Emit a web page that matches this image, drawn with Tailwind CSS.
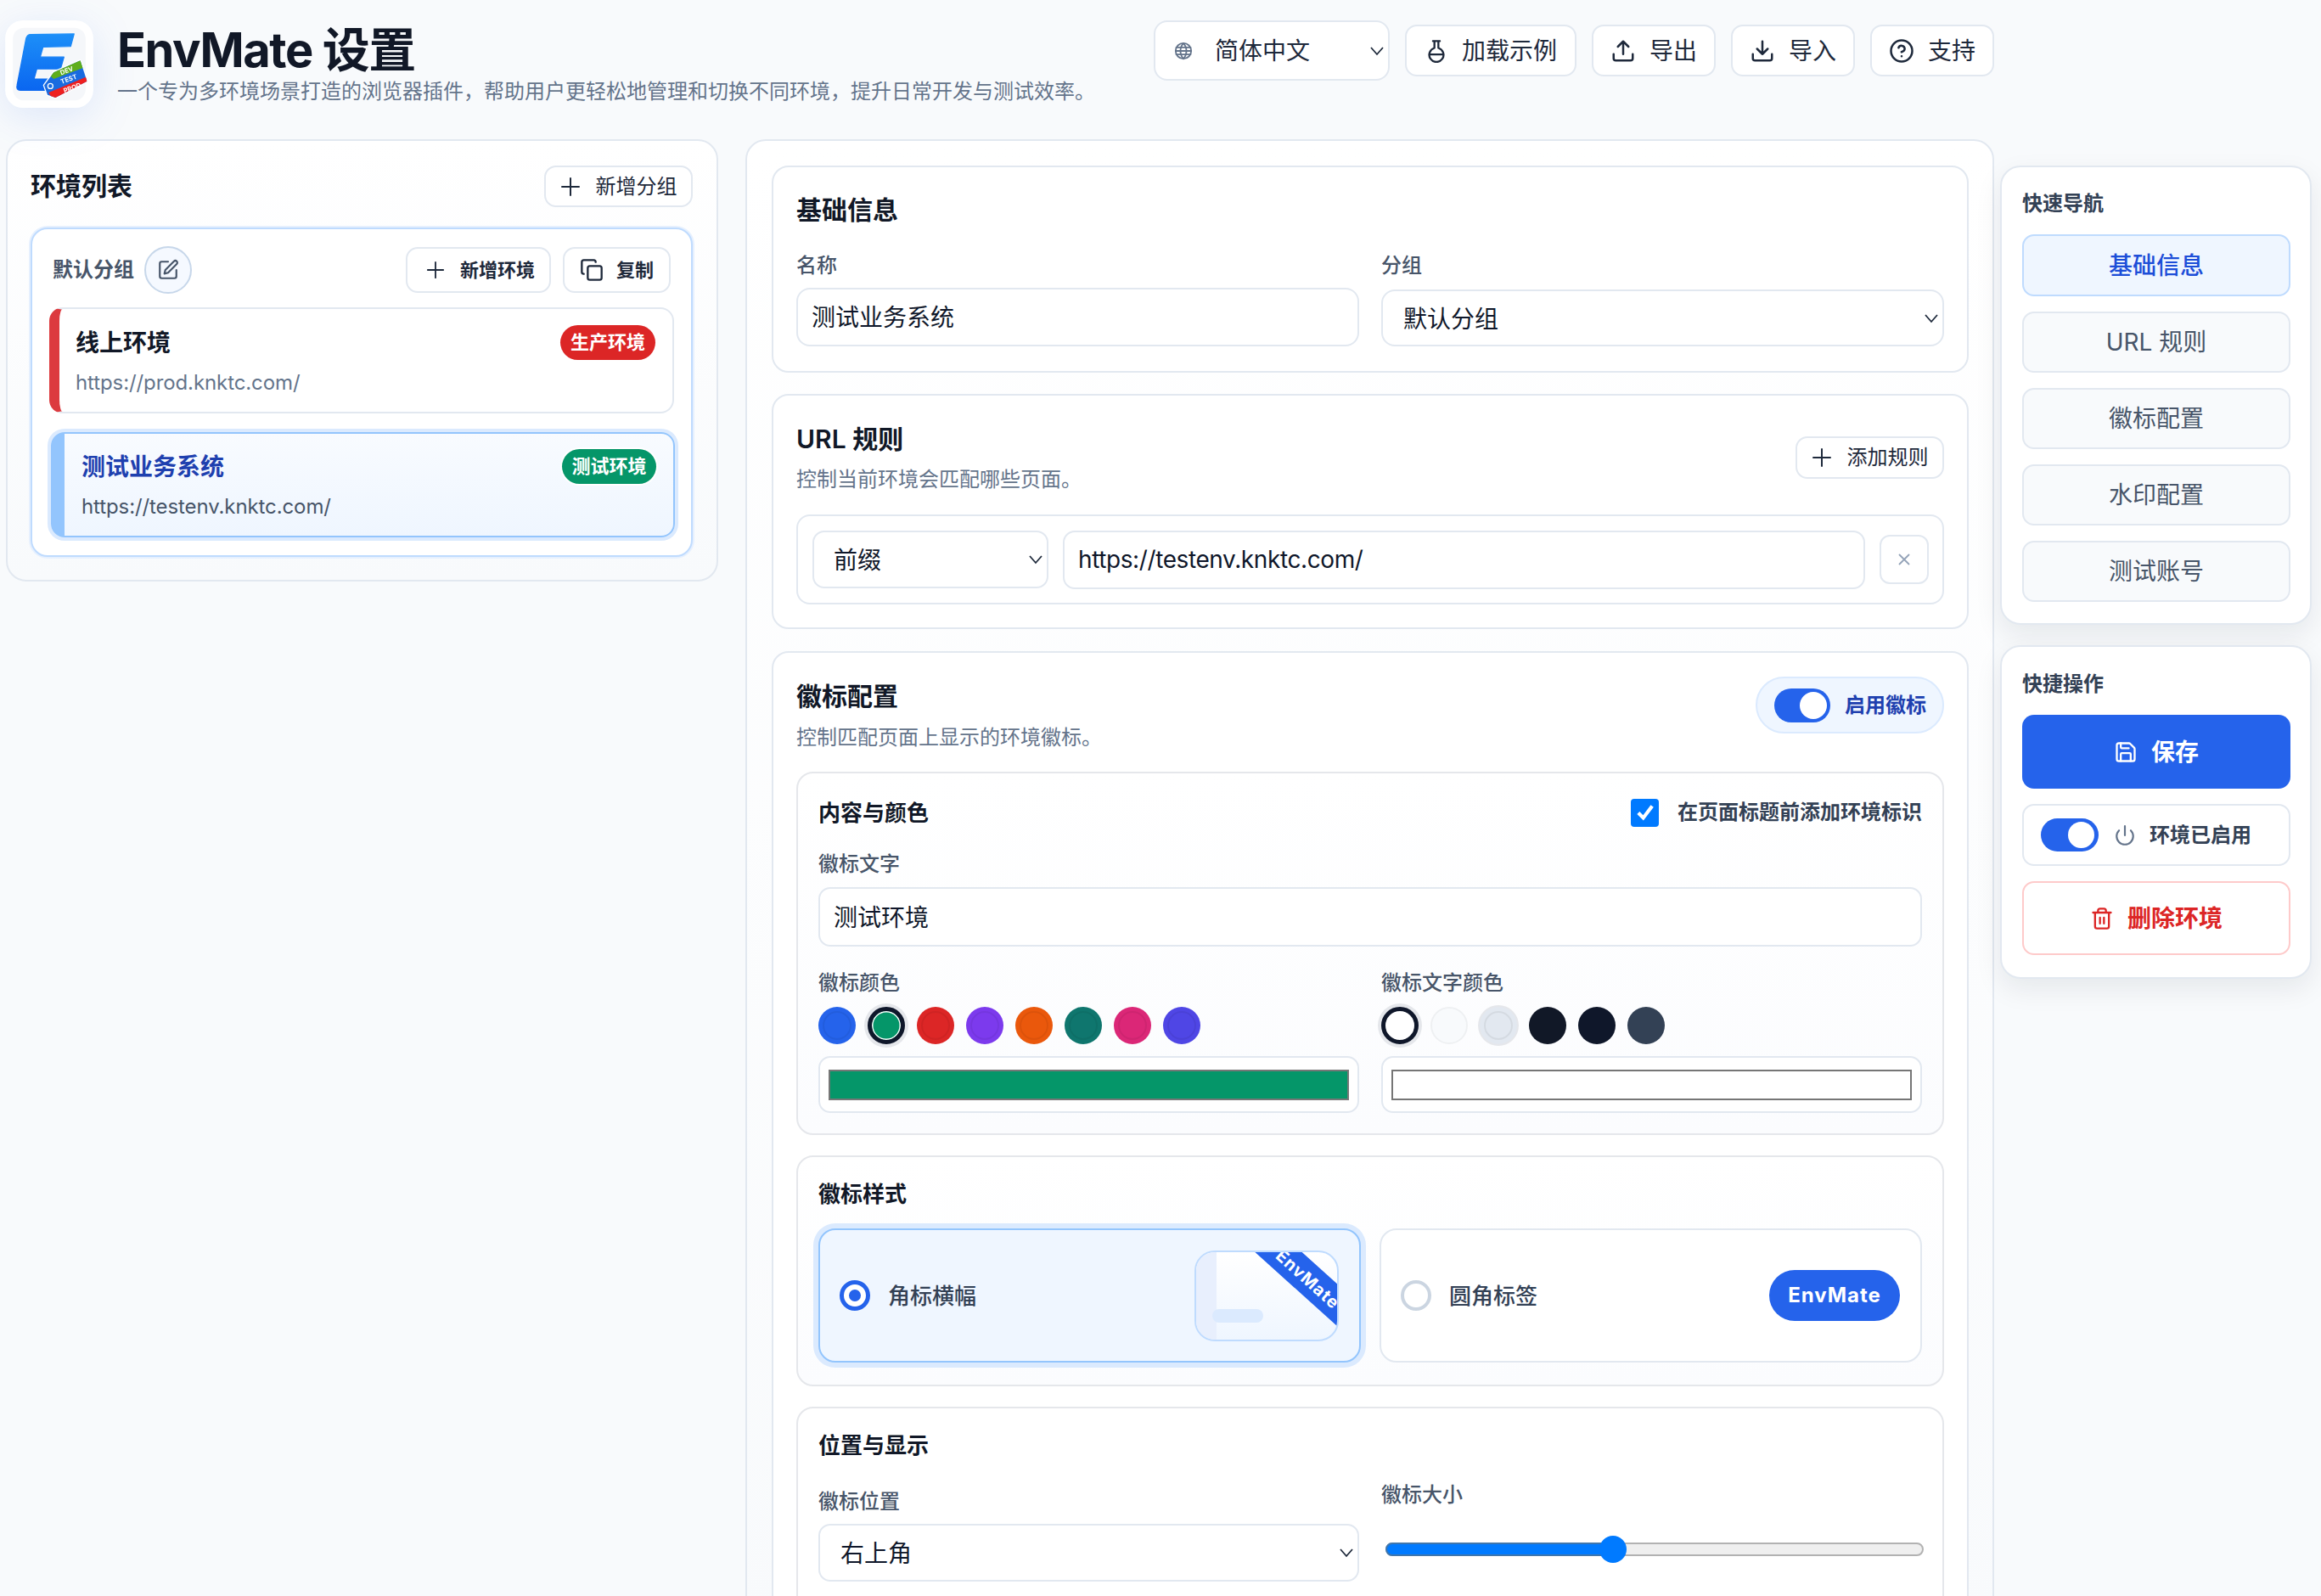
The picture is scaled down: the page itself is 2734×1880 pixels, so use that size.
<!DOCTYPE html>
<html lang="zh-CN">

<head>
    <meta charset="UTF-8">
    <title>EnvMate 设置</title>
    <script src="https://cdn.jsdelivr.net/npm/@tailwindcss/browser@4"></script>
</head>

<body class="h-[1880px] overflow-hidden bg-[#f8fafc] text-[#0f172a] [font-family:Inter,'Noto_Sans_CJK_SC',sans-serif]">

    <!-- header -->
    <header class="flex h-[164px] pl-[6px] pr-[385px] pt-[24px]">
        <svg class="w-[104px] h-[103px] shrink-0 drop-shadow-[0_10px_24px_rgba(37,99,235,0.13)]" viewBox="18 42 312 310">
            <defs>
                <linearGradient id="eblue" x1="0" y1="0" x2="0" y2="1">
                    <stop offset="0" stop-color="#1d8ff8" />
                    <stop offset="1" stop-color="#0a66f0" />
                </linearGradient>
                <clipPath id="tagclip">
                    <path d="M156 272 L190 226 L284 184 L308 258 L196 316 L168 306 Z" />
                </clipPath>
            </defs>
            <rect x="18" y="42" width="312" height="310" rx="62" fill="#fff" />
            <rect x="45" y="68" width="258" height="258" rx="40" fill="#f5f7fa" />
            <path d="M108 92 L262 90 L250 134 L152 136 L142 172 L226 172 L214 214 L130 214 L120 250 L190 250 L178 290 L72 290 Q56 290 60 272 L92 106 Q96 92 108 92 Z" fill="url(#eblue)" stroke="url(#eblue)" stroke-width="4" stroke-linejoin="round" />
            <path d="M156 272 L190 226 L284 184 L308 258 L196 316 L168 306 Z" fill="#fff" stroke="#fff" stroke-width="8" stroke-linejoin="round" />
            <g clip-path="url(#tagclip)">
                <rect x="140" y="170" width="190" height="160" fill="#1a6be0" />
                <path d="M170 232 L300 170 L300 208 L190 250 Z" fill="#5fae1a" />
                <path d="M172 298 L320 236 L320 300 L190 330 Z" fill="#ee2020" />
            </g>
            <circle cx="178" cy="275" r="9" fill="#1a6be0" stroke="#fff" stroke-width="4" />
            <g fill="#fff" font-family="Inter, sans-serif" font-weight="700" font-size="23">
                <text x="216" y="236" transform="rotate(-20 216 236)">DEV</text>
                <text x="218" y="268" transform="rotate(-20 218 268)">TEST</text>
                <text x="228" y="300" transform="rotate(-20 228 300)">PROD</text>
            </g>
        </svg>
        <div class="ml-[28px] flex flex-col pt-[2px]">
            <h1 class="text-[56px] leading-[66px] font-bold tracking-tight text-[#111827]">EnvMate 设置</h1>
            <p class="text-[24px] leading-[32px] text-[#64748b]">一个专为多环境场景打造的浏览器插件，帮助用户更轻松地管理和切换不同环境，提升日常开发与测试效率。</p>
        </div>
        <div class="ml-auto flex h-[71px] items-center gap-[18px] text-[28px] text-[#1e293b]">
            <div class="relative h-[71px] w-[278px]">
                <svg class="absolute left-[24px] top-[25px] w-[22px] h-[22px] text-[#64748b]" viewBox="0 0 24 24" fill="none" stroke="currentColor" stroke-width="2">
                    <circle cx="12" cy="12" r="10" />
                    <path d="M2 12h20M2 7.5h20M2 16.5h20M12 2a15 15 0 0 1 0 20a15 15 0 0 1 0-20" />
                </svg>
                <select class="h-full w-full appearance-none rounded-[16px] border-2 border-[#e2e8f0] bg-white pl-[70px] text-[28px]">
                    <option>简体中文</option>
                </select>
                <svg class="absolute right-[6px] top-[28px] w-[18px] h-[16px]" viewBox="0 0 18 16" fill="none" stroke="#1e293b" stroke-width="1.8"><path d="M2 4l7 8 7-8" /></svg>
            </div>
            <button class="flex h-[61px] w-[202px] items-center justify-center gap-[16px] rounded-[14px] border-2 border-[#e2e8f0] bg-white">
                <svg class="w-[28px] h-[28px]" viewBox="0 0 24 24" fill="none" stroke="currentColor" stroke-width="2" stroke-linecap="round" stroke-linejoin="round"><path d="M8.5 2h7M10 2v7a7.2 7.2 0 1 0 4 0V2M5 15.5h14" /></svg>
                加载示例
            </button>
            <button class="flex h-[61px] w-[146px] items-center justify-center gap-[16px] rounded-[14px] border-2 border-[#e2e8f0] bg-white">
                <svg class="w-[30px] h-[30px]" viewBox="0 0 24 24" fill="none" stroke="currentColor" stroke-width="2" stroke-linecap="round" stroke-linejoin="round"><path d="M21 15v4a2 2 0 0 1-2 2H5a2 2 0 0 1-2-2v-4M17 8l-5-5-5 5M12 3v12" /></svg>
                导出
            </button>
            <button class="flex h-[61px] w-[146px] items-center justify-center gap-[16px] rounded-[14px] border-2 border-[#e2e8f0] bg-white">
                <svg class="w-[30px] h-[30px]" viewBox="0 0 24 24" fill="none" stroke="currentColor" stroke-width="2" stroke-linecap="round" stroke-linejoin="round"><path d="M21 15v4a2 2 0 0 1-2 2H5a2 2 0 0 1-2-2v-4M7 10l5 5 5-5M12 15V3" /></svg>
                导入
            </button>
            <button class="flex h-[61px] w-[146px] items-center justify-center gap-[16px] rounded-[14px] border-2 border-[#e2e8f0] bg-white">
                <svg class="w-[30px] h-[30px]" viewBox="0 0 24 24" fill="none" stroke="currentColor" stroke-width="2" stroke-linecap="round" stroke-linejoin="round"><circle cx="12" cy="12" r="10" /><path d="M9.1 9a3 3 0 0 1 5.8 1c0 2-3 3-3 3M12 17h.01" /></svg>
                支持
            </button>
        </div>
    </header>

    <div class="flex items-start pl-[7px]">

        <!-- env list -->
        <aside class="w-[839px] rounded-[24px] border-2 border-[#e2e8f0] bg-gradient-to-b from-white to-[#f8fafc] pl-[27px] pr-[28px] pb-[27px] pt-[29px]">
            <div class="flex h-[49px] items-center justify-between">
                <h2 class="text-[30px] font-semibold text-[#111827]">环境列表</h2>
                <button class="flex h-[49px] w-[175px] items-center justify-center gap-[18px] rounded-[14px] border-2 border-[#e2e8f0] bg-white text-[24px] text-[#1e293b]">
                    <svg class="w-[24px] h-[24px]" viewBox="0 0 24 24" fill="none" stroke="currentColor" stroke-width="2" stroke-linecap="round"><path d="M12 2v20M2 12h20" /></svg>
                    新增分组
                </button>
            </div>
            <div class="mt-[24px] rounded-[20px] border-2 border-[#bfdbfe] bg-white px-[20px] pb-[21px] pt-[20px] shadow-[0_0_0_2px_#e6f0fe]">
                <div class="flex h-[56px] items-center">
                    <span class="ml-[4px] text-[24px] font-semibold text-[#475569]">默认分组</span>
                    <button class="ml-[12px] flex h-[56px] w-[56px] items-center justify-center rounded-full border-2 border-[#c7d7ea] bg-[#f5f9ff] text-[#475569]">
                        <svg class="w-[26px] h-[26px]" viewBox="0 0 24 24" fill="none" stroke="currentColor" stroke-width="2" stroke-linecap="round" stroke-linejoin="round"><path d="M12 3H5a2 2 0 0 0-2 2v14a2 2 0 0 0 2 2h14a2 2 0 0 0 2-2v-7" /><path d="M18.4 2.6a2.1 2.1 0 1 1 3 3L12 15l-4 1 1-4Z" /></svg>
                    </button>
                    <button class="ml-auto flex h-[54px] w-[171px] items-center gap-[18px] rounded-[14px] border-2 border-[#e2e8f0] bg-white pl-[22px] text-[22px] font-semibold text-[#1e293b]">
                        <svg class="w-[22px] h-[22px]" viewBox="0 0 24 24" fill="none" stroke="currentColor" stroke-width="2" stroke-linecap="round"><path d="M12 2v20M2 12h20" /></svg>
                        新增环境
                    </button>
                    <button class="ml-[14px] mr-[4px] flex h-[54px] w-[127px] items-center justify-center gap-[15px] rounded-[14px] border-2 border-[#e2e8f0] bg-white text-[22px] font-semibold text-[#1e293b]">
                        <svg class="w-[28px] h-[28px]" viewBox="0 0 24 24" fill="none" stroke="currentColor" stroke-width="2" stroke-linecap="round" stroke-linejoin="round"><rect x="8" y="8" width="14" height="14" rx="2" /><path d="M4 16a2 2 0 0 1-2-2V4a2 2 0 0 1 2-2h10a2 2 0 0 1 2 2" /></svg>
                        复制
                    </button>
                </div>
                <div class="mt-[16px] h-[125px] rounded-[16px] border-2 border-l-[12px] border-[#e2e8f0] border-l-[#dc3a3f] bg-white pl-[19px] pr-[20px] pt-[19px]">
                    <div class="flex h-[41px] items-center justify-between">
                        <span class="text-[28px] font-semibold text-[#111827]">线上环境</span>
                        <span class="flex h-[41px] w-[112px] items-center justify-center rounded-full bg-[#dc2626] text-[22px] font-bold text-white">生产环境</span>
                    </div>
                    <p class="mt-[9px] text-[24px] leading-[36px] tracking-[-0.1px] text-[#64748b]">https://prod.knktc.com/</p>
                </div>
                <div class="ml-[2px] mr-[-1px] mt-[22px] h-[124px] rounded-[16px] border-2 border-l-[16px] border-[#93c5fd] bg-gradient-to-b from-[#f8fbff] to-[#eff6ff] pl-[20px] pr-[20px] pt-[18px] shadow-[0_0_0_4px_#dbeafe]">
                    <div class="flex h-[41px] items-center justify-between">
                        <span class="text-[28px] font-bold text-[#1e40af]">测试业务系统</span>
                        <span class="flex h-[41px] w-[111px] items-center justify-center rounded-full bg-[#059669] text-[22px] font-bold text-white shadow-[0_0_0_2px_#fff]">测试环境</span>
                    </div>
                    <p class="mt-[9px] text-[24px] leading-[36px] tracking-[-0.1px] text-[#475569]">https://testenv.knktc.com/</p>
                </div>
            </div>
        </aside>

        <!-- main form -->
        <main class="ml-[32px] w-[1471px] shrink-0 rounded-[24px] border-2 border-[#e2e8f0] bg-gradient-to-b from-white to-[#f8fafc] pl-[29px] pr-[28px] pt-[29px]">

            <section class="h-[244px] rounded-[20px] border-2 border-[#e2e8f0] bg-white px-[27px] pt-[30px]">
                <h3 class="text-[30px] font-semibold leading-[40px] text-[#111827]">基础信息</h3>
                <div class="mt-[30px] grid grid-cols-2 gap-x-[26px]">
                    <div>
                        <label class="block text-[24px] font-medium leading-[32px] text-[#475569]">名称</label>
                        <input class="mt-[10px] h-[69px] w-full rounded-[16px] border-2 border-[#e2e8f0] bg-white px-[16px] pb-[3px] text-[28px]" value="测试业务系统">
                    </div>
                    <div>
                        <label class="block text-[24px] font-medium leading-[32px] text-[#475569]">分组</label>
                        <div class="relative mt-[12px] h-[67px]">
                            <select class="h-full w-full appearance-none rounded-[16px] border-2 border-[#e2e8f0] bg-white pl-[24px] pt-[2px] text-[28px]">
                                <option>默认分组</option>
                            </select>
                            <svg class="absolute right-[6px] top-[26px] w-[18px] h-[16px]" viewBox="0 0 18 16" fill="none" stroke="#1e293b" stroke-width="1.8"><path d="M2 4l7 8 7-8" /></svg>
                        </div>
                    </div>
                </div>
            </section>

            <section class="mt-[25px] h-[277px] rounded-[20px] border-2 border-[#e2e8f0] bg-white px-[27px] pt-[31px]">
                <div class="flex items-center justify-between">
                    <div>
                        <h3 class="text-[30px] font-semibold leading-[40px] text-[#111827]">URL 规则</h3>
                        <p class="mt-[12px] text-[24px] leading-[32px] text-[#64748b]">控制当前环境会匹配哪些页面。</p>
                    </div>
                    <button class="flex h-[50px] w-[175px] items-center justify-center gap-[18px] rounded-[14px] border-2 border-[#e2e8f0] bg-white text-[24px] text-[#1e293b]">
                        <svg class="w-[24px] h-[24px]" viewBox="0 0 24 24" fill="none" stroke="currentColor" stroke-width="2" stroke-linecap="round"><path d="M12 2v20M2 12h20" /></svg>
                        添加规则
                    </button>
                </div>
                <div class="mt-[25px] flex h-[106px] items-center gap-[17px] rounded-[16px] border-2 border-[#e2e8f0] bg-white pl-[17px] pr-[16px]">
                    <div class="relative h-[68px] w-[278px] shrink-0">
                        <select class="h-full w-full appearance-none rounded-[14px] border-2 border-[#e2e8f0] bg-white pl-[23px] pt-[2px] text-[28px]">
                            <option>前缀</option>
                        </select>
                        <svg class="absolute right-[6px] top-[26px] w-[18px] h-[16px]" viewBox="0 0 18 16" fill="none" stroke="#1e293b" stroke-width="1.8"><path d="M2 4l7 8 7-8" /></svg>
                    </div>
                    <input class="h-[69px] flex-1 rounded-[14px] border-2 border-[#e2e8f0] bg-white px-[16px] text-[28px] tracking-[-0.4px]" value="https://testenv.knktc.com/">
                    <button class="flex h-[58px] w-[58px] shrink-0 items-center justify-center rounded-[12px] border-2 border-[#e2e8f0] bg-white text-[#94a3b8]">
                        <svg class="w-[22px] h-[22px]" viewBox="0 0 24 24" fill="none" stroke="currentColor" stroke-width="2" stroke-linecap="round"><path d="M6 6l12 12M18 6L6 18" /></svg>
                    </button>
                </div>
            </section>

            <section class="mt-[26px] rounded-[20px] border-2 border-[#e2e8f0] bg-white px-[27px] pt-[31px]">
                <div class="flex items-start justify-between">
                    <div>
                        <h3 class="text-[30px] font-semibold leading-[40px] text-[#111827]">徽标配置</h3>
                        <p class="mt-[13px] text-[24px] leading-[32px] text-[#64748b]">控制匹配页面上显示的环境徽标。</p>
                    </div>
                    <div class="-mt-[3px] flex h-[67px] w-[222px] items-center rounded-full border-2 border-[#dbeafe] bg-[#eff6ff] pl-[20px]">
                        <span class="relative block h-[40px] w-[66px] rounded-full bg-[#2563eb]">
                            <span class="absolute right-[4px] top-[4px] h-[32px] w-[32px] rounded-full bg-white"></span>
                        </span>
                        <span class="ml-[17px] text-[24px] font-semibold text-[#1e40af]">启用徽标</span>
                    </div>
                </div>

                <!-- content and colours -->
                <div class="mt-[24px] rounded-[20px] border-2 border-[#e5e7eb] bg-gradient-to-b from-white to-[#fbfcfe] pl-[24px] pr-[24px] pt-[28px] pb-[24px] h-[428px]">
                    <div class="flex h-[36px] items-center justify-between">
                        <h4 class="text-[26px] font-semibold text-[#111827]">内容与颜色</h4>
                        <label class="flex items-center gap-[22px] text-[24px] font-semibold text-[#334155]">
                            <span class="flex h-[33px] w-[33px] items-center justify-center rounded-[4px] bg-[#007aff]">
                                <svg class="w-[28px] h-[28px]" viewBox="0 0 24 24" fill="none" stroke="#fff" stroke-width="3.6"><path d="M5 12.5l5 5L19 5.5" /></svg>
                            </span>
                            在页面标题前添加环境标识
                        </label>
                    </div>
                    <label class="mt-[27px] block text-[24px] font-medium leading-[32px] text-[#475569]">徽标文字</label>
                    <input class="mt-[11px] h-[70px] w-full rounded-[14px] border-2 border-[#e2e8f0] bg-white px-[16px] pb-[3px] text-[28px]" value="测试环境">
                    <div class="mt-[27px] grid grid-cols-2 gap-x-[26px]">
                        <div>
                            <label class="block text-[24px] font-medium leading-[32px] text-[#475569]">徽标颜色</label>
                            <div class="mt-[12px] flex h-[44px] gap-[14px]">
                                <span class="h-[44px] w-[44px] rounded-full bg-[#2563eb] [outline:2px_solid_rgba(0,0,0,0.06)] [outline-offset:-7px]"></span>
                                <span class="h-[44px] w-[44px] rounded-full border-[5px] border-[#0f172a] bg-[#059669] shadow-[inset_0_0_0_1.5px_#fff,0_0_0_4px_#e5e7eb]"></span>
                                <span class="h-[44px] w-[44px] rounded-full bg-[#dc2626] [outline:2px_solid_rgba(0,0,0,0.06)] [outline-offset:-7px]"></span>
                                <span class="h-[44px] w-[44px] rounded-full bg-[#7c3aed] [outline:2px_solid_rgba(0,0,0,0.06)] [outline-offset:-7px]"></span>
                                <span class="h-[44px] w-[44px] rounded-full bg-[#ea580c] [outline:2px_solid_rgba(0,0,0,0.06)] [outline-offset:-7px]"></span>
                                <span class="h-[44px] w-[44px] rounded-full bg-[#0f766e] [outline:2px_solid_rgba(0,0,0,0.06)] [outline-offset:-7px]"></span>
                                <span class="h-[44px] w-[44px] rounded-full bg-[#db2777] [outline:2px_solid_rgba(0,0,0,0.06)] [outline-offset:-7px]"></span>
                                <span class="h-[44px] w-[44px] rounded-full bg-[#4f46e5] [outline:2px_solid_rgba(0,0,0,0.06)] [outline-offset:-7px]"></span>
                            </div>
                            <div class="mt-[14px] flex h-[67px] items-center rounded-[14px] border-2 border-[#e2e8f0] bg-white px-[10px]">
                                <span class="block h-[36px] w-full border-2 border-[#767676] bg-[#059669]"></span>
                            </div>
                        </div>
                        <div>
                            <label class="block text-[24px] font-medium leading-[32px] text-[#475569]">徽标文字颜色</label>
                            <div class="mt-[12px] flex h-[44px] gap-[14px]">
                                <span class="h-[44px] w-[44px] rounded-full border-[5px] border-[#0f172a] bg-white shadow-[0_0_0_4px_#e5e7eb]"></span>
                                <span class="h-[44px] w-[44px] rounded-full bg-[#f8fafc] [outline:2px_solid_rgba(0,0,0,0.04)] [outline-offset:-2px]"></span>
                                <span class="h-[44px] w-[44px] rounded-full bg-[#e2e8f0] [outline:2px_solid_rgba(0,0,0,0.06)] [outline-offset:-7px] shadow-[0_0_0_2px_#e5e7eb]"></span>
                                <span class="h-[44px] w-[44px] rounded-full bg-[#111827]"></span>
                                <span class="h-[44px] w-[44px] rounded-full bg-[#0f172a]"></span>
                                <span class="h-[44px] w-[44px] rounded-full bg-[#334155]"></span>
                            </div>
                            <div class="mt-[14px] flex h-[67px] items-center rounded-[14px] border-2 border-[#e2e8f0] bg-white px-[10px]">
                                <span class="block h-[36px] w-full border-2 border-[#767676] bg-white"></span>
                            </div>
                        </div>
                    </div>
                </div>

                <!-- style -->
                <div class="mt-[24px] h-[272px] rounded-[20px] border-2 border-[#e5e7eb] bg-gradient-to-b from-white to-[#fbfcfe] pl-[24px] pr-[24px] pt-[26px]">
                    <h4 class="text-[26px] font-semibold leading-[36px] text-[#111827]">徽标样式</h4>
                    <div class="mt-[22px] grid grid-cols-2 gap-x-[22px]">
                        <div class="flex h-[158px] items-center rounded-[20px] border-2 border-[#93c5fd] bg-[#eff6ff] pl-[23px] pr-[24px] shadow-[0_0_0_6px_#dbeafe]">
                            <span class="flex h-[36px] w-[36px] items-center justify-center rounded-full border-[5px] border-[#2563eb] bg-white">
                                <span class="h-[14px] w-[14px] rounded-full bg-[#2563eb]"></span>
                            </span>
                            <span class="ml-[21px] text-[26px] font-medium text-[#334155]">角标横幅</span>
                            <div class="relative ml-auto h-[107px] w-[170px] overflow-hidden rounded-[24px] border-2 border-[#bfdbfe] bg-gradient-to-b from-white to-[#eff6ff]">
                                <div class="absolute inset-y-0 left-0 w-[24px] bg-[#e8effd]"></div>
                                <div class="absolute left-[19px] top-[67px] h-[16px] w-[60px] rounded-full bg-[#dbeafe]"></div>
                                <div class="absolute left-[52px] top-[13px] flex h-[37px] w-[160px] rotate-[42deg] items-center justify-center bg-[#2563eb] text-[20px] font-bold tracking-[1px] text-white">EnvMate</div>
                            </div>
                        </div>
                        <div class="flex h-[158px] items-center rounded-[20px] border-2 border-[#e2e8f0] bg-white pl-[23px] pr-[24px]">
                            <span class="h-[36px] w-[36px] rounded-full border-[4px] border-[#cbd5e1] bg-white"></span>
                            <span class="ml-[21px] text-[26px] font-medium text-[#334155]">圆角标签</span>
                            <span class="ml-auto flex h-[60px] w-[154px] items-center justify-center rounded-full bg-[#2563eb] text-[24px] font-bold tracking-[1px] text-white">EnvMate</span>
                        </div>
                    </div>
                </div>

                <!-- position -->
                <div class="mt-[24px] h-[300px] rounded-[20px] border-2 border-[#e5e7eb] bg-white pl-[24px] pr-[24px] pt-[26px]">
                    <h4 class="text-[26px] font-semibold leading-[36px] text-[#111827]">位置与显示</h4>
                    <div class="mt-[24px] grid grid-cols-2 gap-x-[26px]">
                        <div class="pt-[8px]">
                            <label class="block text-[24px] font-medium leading-[32px] text-[#475569]">徽标位置</label>
                            <div class="relative mt-[10px] h-[68px]">
                                <select class="h-full w-full appearance-none rounded-[14px] border-2 border-[#e2e8f0] bg-white pl-[24px] pt-[2px] text-[28px]">
                                    <option>右上角</option>
                                </select>
                                <svg class="absolute right-[6px] top-[26px] w-[18px] h-[16px]" viewBox="0 0 18 16" fill="none" stroke="#1e293b" stroke-width="1.8"><path d="M2 4l7 8 7-8" /></svg>
                            </div>
                        </div>
                        <div>
                            <label class="block text-[24px] font-medium leading-[32px] text-[#475569]">徽标大小</label>
                            <div class="relative mt-[40px] ml-[5px] h-[16px] w-[634px] rounded-full border-2 border-[#b2b2b2] bg-[#efefef]">
                                <div class="h-full w-[266px] rounded-l-full bg-[#007aff] -m-[2px] box-content border-2 border-[#3f76ad]"></div>
                                <div class="absolute left-[250px] -top-[10px] h-[32px] w-[32px] rounded-full bg-[#007aff]"></div>
                            </div>
                        </div>
                    </div>
                </div>
            </section>
        </main>

        <!-- quick nav and actions -->
        <aside class="ml-[7px] mt-[31px] flex w-[367px] shrink-0 flex-col gap-[24px]">
            <div class="h-[541px] rounded-[24px] border-2 border-[#e2e8f0] bg-white pl-[24px] pr-[23px] pt-[27px] shadow-[0_12px_32px_rgba(15,23,42,0.08)]">
                <h4 class="text-[24px] font-semibold leading-[32px] text-[#334155]">快速导航</h4>
                <div class="mt-[20px] flex flex-col gap-[18px] text-[28px] text-[#475569]">
                    <a class="flex h-[73px] items-center justify-center rounded-[14px] border-2 border-[#bfdbfe] bg-[#eff6ff] font-medium text-[#1d4ed8]">基础信息</a>
                    <a class="flex h-[72px] items-center justify-center rounded-[14px] border-2 border-[#e2e8f0] bg-[#f8fafc]">URL 规则</a>
                    <a class="flex h-[72px] items-center justify-center rounded-[14px] border-2 border-[#e2e8f0] bg-[#f8fafc]">徽标配置</a>
                    <a class="flex h-[72px] items-center justify-center rounded-[14px] border-2 border-[#e2e8f0] bg-[#f8fafc]">水印配置</a>
                    <a class="flex h-[72px] items-center justify-center rounded-[14px] border-2 border-[#e2e8f0] bg-[#f8fafc]">测试账号</a>
                </div>
            </div>
            <div class="h-[393px] rounded-[24px] border-2 border-[#e2e8f0] bg-white pl-[24px] pr-[23px] pt-[28px] shadow-[0_12px_32px_rgba(15,23,42,0.08)]">
                <h4 class="text-[24px] font-semibold leading-[32px] text-[#334155]">快捷操作</h4>
                <button class="mt-[20px] flex h-[87px] w-full items-center justify-center gap-[16px] rounded-[14px] bg-[#2563eb] text-[28px] font-bold text-white">
                    <svg class="w-[28px] h-[28px]" viewBox="0 0 24 24" fill="none" stroke="currentColor" stroke-width="2" stroke-linecap="round" stroke-linejoin="round"><path d="M15.2 3a2 2 0 0 1 1.4.6l3.8 3.8a2 2 0 0 1 .6 1.4V19a2 2 0 0 1-2 2H5a2 2 0 0 1-2-2V5a2 2 0 0 1 2-2z" /><path d="M17 21v-7a1 1 0 0 0-1-1H8a1 1 0 0 0-1 1v7M7 3v4a1 1 0 0 0 1 1h7" /></svg>
                    保存
                </button>
                <div class="mt-[18px] flex h-[73px] items-center rounded-[14px] border-2 border-[#e2e8f0] bg-white pl-[20px]">
                    <span class="relative block h-[39px] w-[68px] rounded-full bg-[#2563eb]">
                        <span class="absolute right-[5px] top-[4px] h-[31px] w-[31px] rounded-full bg-white"></span>
                    </span>
                    <svg class="ml-[18px] w-[26px] h-[26px] text-[#64748b]" viewBox="0 0 24 24" fill="none" stroke="currentColor" stroke-width="2" stroke-linecap="round"><path d="M12 2v10M18.4 6.6a9 9 0 1 1-12.8 0" /></svg>
                    <span class="ml-[16px] text-[24px] font-semibold text-[#334155]">环境已启用</span>
                </div>
                <button class="mt-[18px] flex h-[87px] w-full items-center justify-center gap-[16px] rounded-[14px] border-2 border-[#fecaca] bg-white text-[28px] font-bold text-[#dc2626]">
                    <svg class="w-[28px] h-[28px]" viewBox="0 0 24 24" fill="none" stroke="currentColor" stroke-width="2" stroke-linecap="round" stroke-linejoin="round"><path d="M3 6h18M19 6v14a2 2 0 0 1-2 2H7a2 2 0 0 1-2-2V6M8 6V4a2 2 0 0 1 2-2h4a2 2 0 0 1 2 2v2M10 11v6M14 11v6" /></svg>
                    删除环境
                </button>
            </div>
        </aside>
    </div>

</body>

</html>
